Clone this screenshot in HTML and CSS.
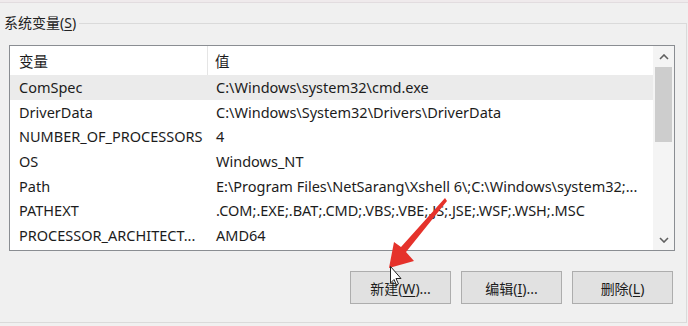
FILE: index.html
```html
<!DOCTYPE html>
<html lang="zh-CN">
<head>
<meta charset="utf-8">
<title>系统变量</title>
<link rel="stylesheet" href="styles.css">
</head>
<body>
<div class="top-strip"></div>
<fieldset class="group">
  <legend class="group-title">系统变量(<u>S</u>)</legend>
  <div class="listbox">
    <div class="list">
      <div class="row head">
        <div class="c1">变量</div>
        <div class="c2">值</div>
      </div>
      <div class="row sel"><div class="c1">ComSpec</div><div class="c2">C:\Windows\system32\cmd.exe</div></div>
      <div class="row"><div class="c1">DriverData</div><div class="c2">C:\Windows\System32\Drivers\DriverData</div></div>
      <div class="row"><div class="c1">NUMBER_OF_PROCESSORS</div><div class="c2">4</div></div>
      <div class="row"><div class="c1">OS</div><div class="c2">Windows_NT</div></div>
      <div class="row"><div class="c1">Path</div><div class="c2">E:\Program Files\NetSarang\Xshell 6\;C:\Windows\system32;...</div></div>
      <div class="row"><div class="c1">PATHEXT</div><div class="c2">.COM;.EXE;.BAT;.CMD;.VBS;.VBE;.JS;.JSE;.WSF;.WSH;.MSC</div></div>
      <div class="row"><div class="c1">PROCESSOR_ARCHITECT...</div><div class="c2">AMD64</div></div>
    </div>
    <div class="scrollbar">
      <div class="sb-btn">
        <svg width="10" height="6" viewBox="0 0 10 6"><path d="M1 5 L5 1 L9 5" fill="none" stroke="#606060" stroke-width="1.6"/></svg>
      </div>
      <div class="sb-track">
        <div class="sb-thumb"></div>
      </div>
      <div class="sb-btn">
        <svg width="10" height="6" viewBox="0 0 10 6"><path d="M1 1 L5 5 L9 1" fill="none" stroke="#606060" stroke-width="1.6"/></svg>
      </div>
    </div>
  </div>
  <div class="buttons">
    <button class="btn">新建(<u>W</u>)...</button>
    <button class="btn">编辑(<u>I</u>)...</button>
    <button class="btn">删除(<u>L</u>)</button>
  </div>
</fieldset>
<svg class="overlay" width="688" height="326" viewBox="0 0 688 326">
  <polygon points="445,198 447,201 406,252 414,261 389,268 394,242 401,247" fill="#e5322b"/>
  <path d="M390.5 266.5 L390.5 283 L394 279.5 L396.5 285 L398.5 284 L396 278.5 L401 278.5 Z" fill="#ffffff" stroke="#222" stroke-width="1"/>
</svg>
</body>
</html>
```
FILE: styles.css
```css
html, body {
  margin: 0;
  padding: 0;
}
body {
  position: relative;
  width: 688px;
  height: 326px;
  overflow: hidden;
  background: #f0f0f0;
  font-family: "Noto Sans", "Noto Sans CJK SC", sans-serif;
  font-size: 14.5px;
  color: #1c1c1c;
}
.top-strip {
  height: 2px;
  background: #efeaec;
  border-bottom: 1px solid #e2dcdf;
}
.group {
  margin: 11px 1px 0 0;
  padding: 0;
  border: 1px solid #dadada;
  border-left: 0;
  height: 309px;
  box-sizing: border-box;
  min-width: 0;
}
.group-title {
  padding: 0 3px 0 4px;
  margin-left: 0;
  font-size: 14px;
  line-height: 18px;
  color: #222;
}
u {
  text-decoration: underline;
  text-underline-offset: 2px;
}
.listbox {
  margin: 13px 0 0 9px;
  width: 666px;
  height: 206px;
  box-sizing: border-box;
  border: 1px solid #8a8d92;
  background: #ffffff;
  display: flex;
  overflow: hidden;
}
.list {
  flex: 1;
  min-width: 0;
}
.row {
  display: flex;
  height: 24.6px;
  align-items: center;
  white-space: nowrap;
}
.row.head {
  height: 29px;
}
.row.sel {
  background: #ebebeb;
}
.c1 {
  width: 198px;
  box-sizing: border-box;
  padding-left: 9px;
  flex: none;
  overflow: hidden;
}
.c2 {
  padding-left: 8px;
  flex: 1;
  overflow: hidden;
}
.head .c1, .head .c2 {
  align-self: stretch;
  display: flex;
  align-items: center;
}
.head .c1 {
  border-right: 1px solid #e5e5e5;
}
.head .c2 {
  padding-left: 7px;
}
.scrollbar {
  width: 21px;
  flex: none;
  display: flex;
  flex-direction: column;
  background: #f4f4f4;
}
.sb-btn {
  height: 21px;
  display: flex;
  align-items: center;
  justify-content: center;
  flex: none;
}
.sb-track {
  flex: 1;
  padding: 0 2px;
}
.sb-thumb {
  height: 75px;
  background: #cdcdcd;
}
.buttons {
  display: flex;
  justify-content: flex-end;
  gap: 10px;
  margin: 20px 13px 0 0;
}
.btn {
  width: 101px;
  height: 33px;
  box-sizing: border-box;
  border: 1px solid #adadad;
  background: #e1e1e1;
  font-family: "Noto Sans", "Noto Sans CJK SC", sans-serif;
  font-size: 14px;
  color: #1c1c1c;
  padding: 0;
}
.overlay {
  position: absolute;
  top: 0;
  left: 0;
  pointer-events: none;
}
```
